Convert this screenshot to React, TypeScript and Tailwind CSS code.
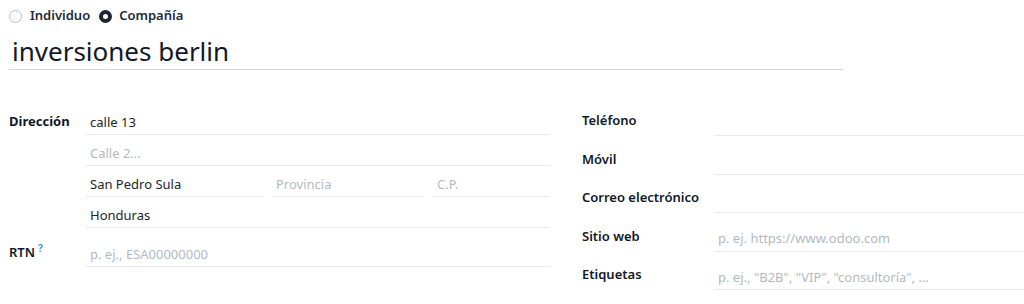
const addressRow = "h-[27px] flex items-center pt-[3px] border-b border-[#e7e9ed]";

const Field = ({ text, placeholder }: { text?: string; placeholder?: string }) => (
  <div className={addressRow}>
    {text ? (
      <span className="pl-[4px] text-[#212529]">{text}</span>
    ) : (
      <span className="pl-[4px] text-[#b4b9bf]">{placeholder}</span>
    )}
  </div>
);

const RightRow = ({ label, placeholder }: { label: string; placeholder?: string }) => (
  <div className="flex">
    <div className="w-[132px] h-[27px] flex items-center pb-[3px] font-semibold text-[#111827]">{label}</div>
    <div className="flex-1 h-[27px] flex items-center pt-[3px] border-b border-[#e7e9ed]">
      <span className="pl-[4px] text-[#b4b9bf]">{placeholder ?? ""}</span>
    </div>
  </div>
);

const App = () => {
  return (
    <div
      className="w-[1024px] h-[304px] bg-white overflow-hidden text-[13px] text-[#212529]"
      style={{ fontFamily: '"Noto Sans", "Open Sans", sans-serif' }}
    >
      <div className="pl-[9px] pt-[7px] flex items-center h-[18px] box-content">
        <span className="w-[13px] h-[13px] rounded-full border border-[#b8bcc2] bg-white" />
        <span className="ml-[8px] font-semibold text-[#1f2937]">Individuo</span>
        <span className="ml-[9px] w-[13px] h-[13px] rounded-full border-[4px] border-[#1f2430] bg-white" />
        <span className="ml-[7px] font-semibold text-[#1f2937]">Compañía</span>
      </div>

      <div className="ml-[9px] w-[835px] mt-[8px] h-[37px] border-b border-[#d5d8dd] flex items-end">
        <span className="pl-[3px] text-[26px] leading-[36px] text-[#111827]">inversiones berlin</span>
      </div>

      <div className="flex mt-[38px]">
        <div className="ml-[9px] w-[541px]">
          <div className="flex">
            <div className="w-[77px] pt-[4px] font-bold text-[#111827]">Dirección</div>
            <div className="flex-1 flex flex-col gap-[4px]">
              <Field text="calle 13" />
              <Field placeholder="Calle 2..." />
              <div className="flex gap-[9px]">
                <div className="w-[177px]">
                  <Field text="San Pedro Sula" />
                </div>
                <div className="w-[152px]">
                  <Field placeholder="Provincia" />
                </div>
                <div className="flex-1">
                  <Field placeholder="C.P." />
                </div>
              </div>
              <Field text="Honduras" />
            </div>
          </div>
          <div className="flex mt-[12px]">
            <div className="w-[77px] pt-[3px] text-[#111827] font-semibold">
              RTN
              <span className="relative -top-[5px] ml-[3px] text-[10px] text-[#3a9fc0] font-bold">?</span>
            </div>
            <div className="flex-1">
              <Field placeholder="p. ej., ESA00000000" />
            </div>
          </div>
        </div>

        <div className="ml-[32px] pt-[1px] flex-1 flex flex-col gap-[11.5px]">
          <RightRow label="Teléfono" />
          <RightRow label="Móvil" />
          <RightRow label="Correo electrónico" />
          <RightRow label="Sitio web" placeholder="p. ej. https://www.odoo.com" />
          <RightRow label="Etiquetas" placeholder={'p. ej., "B2B", "VIP", "consultoría", ...'} />
        </div>
      </div>
    </div>
  );
};

export default App;
